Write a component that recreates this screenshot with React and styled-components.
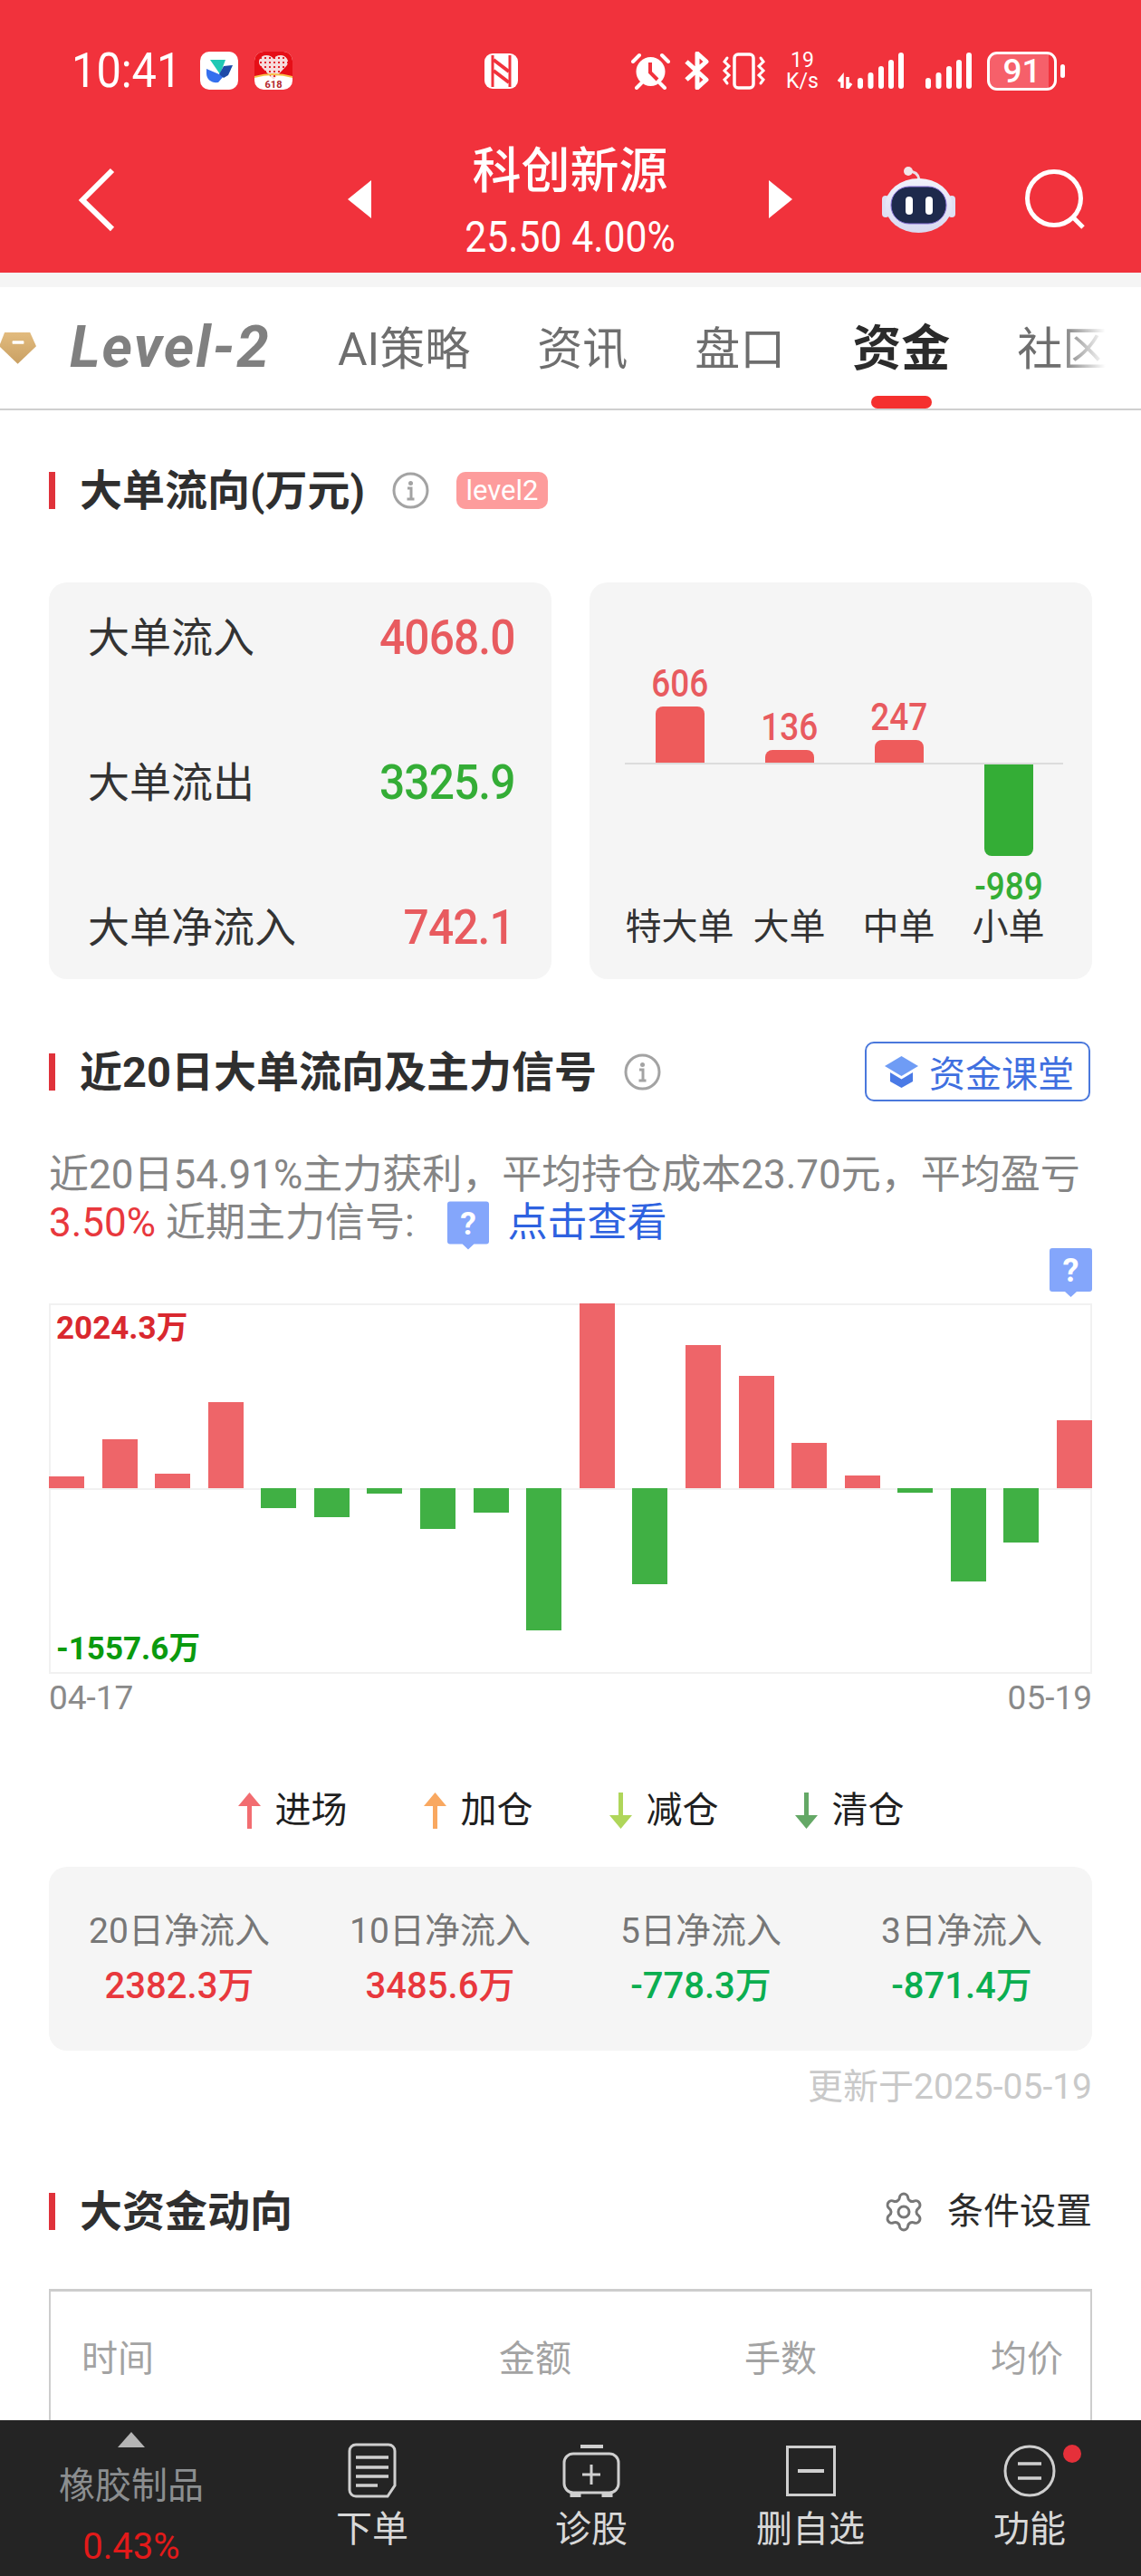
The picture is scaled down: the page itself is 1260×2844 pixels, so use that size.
import React from 'react'
import styled, { createGlobalStyle } from 'styled-components'
import { Settings } from 'lucide-react'

const GlobalStyle = createGlobalStyle`
  html, body {
    margin: 0;
    padding: 0;
    background: #fff;
  }
  body {
    font-family: Roboto, "Noto Sans CJK SC", sans-serif;
  }
  * {
    box-sizing: border-box;
  }
`

const Page = styled.div`
  width: 1260px;
  height: 2844px;
  display: flex;
  flex-direction: column;
  overflow: hidden;
  background: #fff;
  color: #2b2b2b;
`

const Header = styled.header`
  height: 301px;
  flex: none;
  background: #f1323c;
  color: #fff;
  padding-top: 48px;
`

const StatusBar = styled.div`
  height: 60px;
  display: flex;
  align-items: center;
  padding: 0 84px 0 79px;
`

// the clock and prices use a narrow DIN style face, so Roboto gets squeezed a little
const Time = styled.span`
  width: 142px;
  font-size: 53px;
  line-height: 60px;
  transform: scaleX(0.92);
  transform-origin: left center;
`

const AppIcon = styled.svg`
  width: 42px;
  height: 42px;
  margin-right: ${(p) => p.$mr || 0}px;
`

const StatusRight = styled.div`
  margin-left: auto;
  display: flex;
  align-items: center;
`

const StatusIcon = styled.svg`
  flex: none;
  margin-left: ${(p) => p.$ml || 0}px;
`

const NetSpeed = styled.div`
  width: 40px;
  margin-left: 20px;
  text-align: center;
  font-size: 23px;
  line-height: 23px;
`

const Battery = styled.div`
  width: 77px;
  height: 43px;
  margin-left: 17px;
  border: 3px solid #fff;
  border-radius: 11px;
  background: linear-gradient(90deg, #f6606a 92%, transparent 92%);
  text-align: center;
  font-size: 37px;
  line-height: 37px;
  font-weight: 500;
`

const BatteryCap = styled.div`
  width: 5px;
  height: 15px;
  margin-left: 4px;
  border-radius: 3px;
  background: #fff;
`

const Nav = styled.nav`
  height: 128px;
  margin-top: 48px;
  display: flex;
  align-items: center;
  padding-left: 86px;
`

const NavIcon = styled.svg`
  flex: none;
  margin-left: ${(p) => p.$ml || 0}px;
`

const Stock = styled.div`
  width: 439px;
  text-align: center;
`

const StockName = styled.div`
  font-size: 54px;
  line-height: 62px;
  font-weight: 500;
  padding-top: 3px;
  margin-bottom: -3px;
`

const StockPrice = styled.div`
  margin-top: 22px;
  font-size: 48px;
  line-height: 44px;
  transform: scaleX(0.89);
`

const GreyStrip = styled.div`
  height: 16px;
  flex: none;
  background: #f5f5f5;
`

const Tabs = styled.div`
  position: relative;
  height: 136px;
  flex: none;
  display: flex;
  align-items: center;
  gap: 74px;
  overflow: hidden;
  border-bottom: 2px solid #cfcfcf;

  &::after {
    content: '';
    position: absolute;
    top: 0;
    right: 30px;
    bottom: 2px;
    width: 62px;
    background: linear-gradient(90deg, rgba(255, 255, 255, 0), #fff 85%);
  }
`

const LogoTab = styled.div`
  width: 299px;
  flex: none;
  display: flex;
  align-items: center;
`

const LogoText = styled.span`
  margin-left: 37px;
  font-size: 64px;
  line-height: 70px;
  font-weight: 700;
  font-style: italic;
  letter-spacing: 2px;
  color: #808080;
`

const Tab = styled.div`
  position: relative;
  flex: none;
  height: 134px;
  padding-top: 2px;
  line-height: 134px;
  font-size: ${(p) => (p.$active ? 54 : 50)}px;
  font-weight: ${(p) => (p.$active ? 700 : 400)};
  color: ${(p) => (p.$active ? '#2b2b2b' : '#6e6e6e')};
`

const TabMark = styled.span`
  position: absolute;
  left: 21px;
  bottom: 0;
  width: 67px;
  height: 14px;
  border-radius: 7px;
  background: #f5302e;
`

const Content = styled.main`
  flex: 1;
  min-height: 0;
  overflow: hidden;
  padding: 68px 54px 0;
`

const TitleRow = styled.div`
  display: flex;
  align-items: center;
  justify-content: ${(p) => (p.$between ? 'space-between' : 'flex-start')};
  margin-top: ${(p) => p.$mt || 0}px;
  min-height: 41px;
`

const TitleLeft = styled.div`
  display: flex;
  align-items: center;
`

const Title = styled.h2`
  margin: 0;
  height: 41px;
  padding-left: 27px;
  border-left: 7px solid #e0323a;
  font-size: 47px;
  line-height: 41px;
  font-weight: 700;
  color: #2f2f2f;
`

const InfoIcon = styled.svg`
  width: 41px;
  height: 41px;
  margin-left: 30px;
  flex: none;
`

const LevelTag = styled.span`
  margin-left: 30px;
  width: 101px;
  height: 41px;
  border-radius: 10px;
  background: #fd9c9c;
  color: #fff;
  font-size: 31px;
  line-height: 41px;
  text-align: center;
`

const CardRow = styled.div`
  margin-top: 81px;
  display: grid;
  grid-template-columns: 555px 555px;
  justify-content: space-between;
`

const Card = styled.div`
  height: 438px;
  border-radius: 20px;
  background: #f5f5f5;
`

const FlowList = styled(Card)`
  display: flex;
  flex-direction: column;
  justify-content: space-between;
  padding: 30px 41px 28px 43px;
`

const FlowRow = styled.div`
  display: flex;
  justify-content: space-between;
  align-items: center;
  height: 60px;
  font-size: 46px;
  color: #333;
`

const FlowLabel = styled.span`
  margin-top: -6px;
`

const FlowValue = styled.span`
  font-size: 54px;
  font-weight: 500;
  letter-spacing: -1px;
  color: ${(p) => p.$color};
  transform: scaleX(0.92);
  transform-origin: right center;
`

const Bars = styled(Card)`
  padding: 57px 32px 0 39px;
`

const BarsGrid = styled.div`
  width: 484px;
  display: grid;
  grid-template-columns: repeat(4, 121px);
`

const BarCol = styled.div`
  display: flex;
  flex-direction: column;
  align-items: center;
`

const UpArea = styled(BarCol)`
  height: 142px;
  justify-content: flex-end;
`

const DownArea = styled(BarCol)`
  height: 155px;
`

const AxisLine = styled.div`
  grid-column: 1 / -1;
  height: 2px;
  background: #dcdcdc;
`

const Bar = styled.div`
  width: 54px;
  height: ${(p) => p.$h}px;
  background: ${(p) => p.$color};
  border-radius: ${(p) => (p.$down ? '0 0 8px 8px' : '8px 8px 0 0')};
`

const BarValue = styled.div`
  font-size: 42px;
  line-height: 34px;
  font-weight: 500;
  color: ${(p) => p.$color};
  margin-bottom: ${(p) => (p.$down ? 0 : 8)}px;
  margin-top: ${(p) => (p.$down ? 17 : 0)}px;
  transform: scaleX(0.88);
`

const BarLabel = styled.div`
  text-align: center;
  font-size: 40px;
  line-height: 50px;
  white-space: nowrap;
  color: #333;
`

const CourseButton = styled.div`
  width: 249px;
  height: 66px;
  margin-right: 2px;
  display: flex;
  align-items: center;
  padding-left: 20px;
  gap: 12px;
  border: 2px solid #4a78dc;
  border-radius: 10px;
  font-size: 40px;
  color: #3f6fe0;
`

const Summary = styled.p`
  margin: 55px 0 0;
  font-size: 44px;
  line-height: 53px;
  color: #858585;
`

const RedText = styled.span`
  color: #e8383d;
`

const BlueLink = styled.span`
  color: #2e62e0;
`

const HelpInline = styled.svg`
  width: 46px;
  height: 54px;
  margin: -10px 21px -10px 36px;
  vertical-align: middle;
`

const Chart = styled.div`
  position: relative;
  margin-top: 62px;
  height: 409px;
  box-shadow: inset 0 0 0 2px #f1f1f1;
`

const HelpPin = styled.svg`
  position: absolute;
  right: 0;
  top: -61px;
  width: 47px;
  height: 54px;
`

const ChartRow = styled.div`
  height: ${(p) => p.$h}px;
  display: flex;
  justify-content: space-between;
  align-items: ${(p) => (p.$up ? 'flex-end' : 'flex-start')};
  box-shadow: ${(p) => (p.$up ? '0 2px 0 #f1f1f1' : 'none')};
`

const ChartBar = styled.div`
  width: 39px;
  background: ${(p) => p.$color};
`

const ChartExtreme = styled.span`
  position: absolute;
  left: 8px;
  ${(p) => (p.$low ? 'bottom: 7px;' : 'top: 8px;')}
  font-size: 35px;
  line-height: 40px;
  font-weight: 700;
  color: ${(p) => p.$color};
`

const AxisDates = styled.div`
  margin-top: 7px;
  display: flex;
  justify-content: space-between;
  font-size: 37px;
  line-height: 40px;
  color: #8a8a8a;
`

const Legend = styled.div`
  margin-top: 84px;
  display: flex;
  justify-content: center;
  gap: 83px;
`

const LegendItem = styled.div`
  display: flex;
  align-items: center;
  gap: 15px;
  font-size: 40px;
  line-height: 40px;
  color: #1f1f1f;
`

const StatsCard = styled.div`
  margin-top: 42px;
  height: 203px;
  padding-top: 49px;
  display: grid;
  grid-template-columns: repeat(4, 1fr);
  grid-auto-rows: min-content;
  border-radius: 20px;
  background: #f5f5f5;
  text-align: center;
`

const StatLabel = styled.div`
  font-size: 39px;
  line-height: 44px;
  color: #777;
`

const StatValue = styled.div`
  margin-top: 17px;
  font-size: 40px;
  line-height: 44px;
  font-weight: 500;
  color: ${(p) => p.$color};
`

const Updated = styled.div`
  margin-top: 20px;
  text-align: right;
  font-size: 39px;
  line-height: 40px;
  color: #c9c9c9;
`

const ConditionLink = styled.div`
  display: flex;
  align-items: center;
  gap: 24px;
  height: 41px;
  font-size: 40px;
  line-height: 41px;
  color: #2b2b2b;

  svg {
    color: #777;
  }
`

const Table = styled.div`
  margin-top: 65px;
  height: 300px;
  padding: 55px 34px 0;
  border: solid #cdcdcd;
  border-width: 3px 2px 0;
`

const TableHead = styled.div`
  display: grid;
  grid-template-columns: 300px 241px 271px 272px;
  font-size: 40px;
  line-height: 40px;
  color: #a3a3a3;

  span + span {
    text-align: right;
  }
`

const BottomBar = styled.footer`
  height: 172px;
  flex: none;
  display: grid;
  grid-template-columns: 290px repeat(4, 242px);
  background: #242424;
  color: #d8d8d8;
`

const SectorCell = styled.div`
  display: flex;
  flex-direction: column;
  align-items: center;
  padding-top: 13px;
`

const UpTriangle = styled.div`
  width: 0;
  height: 0;
  border-left: 15px solid transparent;
  border-right: 15px solid transparent;
  border-bottom: 17px solid #b5b5b5;
`

const SectorName = styled.div`
  margin-top: 23px;
  font-size: 40px;
  line-height: 40px;
  color: #8b8e90;
`

const SectorChange = styled.div`
  margin-top: 27px;
  font-size: 40px;
  line-height: 40px;
  color: #e21a1a;
`

const ActionCell = styled.div`
  display: flex;
  flex-direction: column;
  align-items: center;
  padding-top: 25px;
`

const ActionIcon = styled.div`
  position: relative;
  height: 61px;
  display: flex;
  align-items: center;
  justify-content: center;
`

const RedDot = styled.span`
  position: absolute;
  left: 66px;
  top: 2px;
  width: 20px;
  height: 20px;
  border-radius: 50%;
  background: #e5303a;
`

const ActionLabel = styled.div`
  margin-top: 15px;
  font-size: 40px;
  line-height: 40px;
`

// status bar drawings
const WorkIcon = () => (
  <AppIcon viewBox="0 0 42 42" $mr={18}>
    <rect width="42" height="42" rx="10" fill="#fff" />
    <path d="M11 9h17l-6 16z" fill="#1fc8b4" />
    <path d="M7 19l14 6 5 2-6 7c-7 1-13-3-13-10z" fill="#3570ee" />
    <path d="M26 16l10-1-5 11-5 3-5-4z" fill="#1d4aa8" />
  </AppIcon>
)

const HeartIcon = () => (
  <AppIcon viewBox="0 0 42 42">
    <defs>
      <pattern id="heartDots" width="5" height="5" patternUnits="userSpaceOnUse">
        <rect width="5" height="5" fill="#f6dcdc" />
        <rect x="1" y="1" width="2" height="2" fill="#e4252c" />
      </pattern>
    </defs>
    <rect width="42" height="42" rx="10" fill="#fff" />
    <path d="M0 10a10 10 0 0 1 10-10h22a10 10 0 0 1 10 10v18q-21 -6 -42 0z" fill="#e60f17" />
    <path d="M21 31L6 15c-3-5 1-11 7-11 4 0 7 2 8 4 1-2 4-4 8-4 6 0 10 6 7 11z" fill="url(#heartDots)" />
    <path d="M0 27q21-6 42 0v2q-21-6-42 0z" fill="#f7c04a" />
    <text x="21" y="40" textAnchor="middle" fontSize="11" fontWeight="700" fill="#b3262c">618</text>
  </AppIcon>
)

const NfcIcon = () => (
  <StatusIcon width="37" height="39" viewBox="0 0 37 39" $ml={212}>
    <rect width="37" height="39" rx="9" fill="#fff" />
    <path d="M9 2v35M28 2v35" stroke="#f1323c" strokeWidth="3" />
    <path d="M10 7l17 13M10 19l17 13" stroke="#f1323c" strokeWidth="4" fill="none" />
  </StatusIcon>
)

const AlarmIcon = () => (
  <StatusIcon width="43" height="41" viewBox="0 0 43 41">
    <circle cx="21.5" cy="21" r="16" fill="#fff" />
    <path d="M21 11v11l8 8" stroke="#f1323c" strokeWidth="4" fill="none" />
    <path d="M2 10l7-7M41 10l-7-7M6 39l5-5M37 39l-5-5" stroke="#fff" strokeWidth="4" strokeLinecap="round" />
  </StatusIcon>
)

const BluetoothIcon = () => (
  <StatusIcon width="29" height="42" viewBox="0 0 29 42" $ml={15}>
    <path d="M3 11l22 20-10 9V2l10 9L3 31" stroke="#fff" strokeWidth="5" fill="none" strokeLinejoin="round" />
  </StatusIcon>
)

const VibrateIcon = () => (
  <StatusIcon width="49" height="41" viewBox="0 0 49 41" $ml={13}>
    <rect x="14" y="2" width="21" height="37" rx="4" fill="none" stroke="#fff" strokeWidth="3.5" />
    <path
      d="M6 6l-3 4 5 5-5 5 5 5-5 5 3 4M43 6l3 4-5 5 5 5-5 5 5 5-3 4"
      stroke="#fff"
      strokeWidth="3"
      fill="none"
      strokeLinecap="round"
    />
  </StatusIcon>
)

const SIGNAL_BARS = [
  { x: 0, h: 12 },
  { x: 11.5, h: 18 },
  { x: 23, h: 25 },
  { x: 34, h: 32 },
  { x: 45, h: 40 },
]

const SignalIcon = ({ ml, width, offset, arrows }) => (
  <StatusIcon width={width} height="40" viewBox={`0 0 ${width} 40`} $ml={ml}>
    {arrows && (
      <path d="M5 39V27l-4 5M11 27v12l4-5" stroke="#fff" strokeWidth="3.5" fill="none" />
    )}
    {SIGNAL_BARS.map((b) => (
      <rect key={b.x} x={b.x + offset} y={40 - b.h} width="6" height={b.h} rx="3" fill="#fff" />
    ))}
  </StatusIcon>
)

const RobotIcon = () => (
  <NavIcon width="81" height="73" viewBox="0 0 81 73" $ml={99}>
    <defs>
      <linearGradient id="robotShell" x1="0" y1="0" x2="0" y2="1">
        <stop offset="0" stopColor="#f1f2fb" />
        <stop offset="1" stopColor="#d8d9f0" />
      </linearGradient>
    </defs>
    <path d="M29 5c7 0 11 3 12 9" stroke="#eadfe6" strokeWidth="3" fill="none" />
    <circle cx="29" cy="5" r="5" fill="#f1e6ea" />
    <rect x="0" y="32" width="8" height="24" rx="4" fill="#dfe0f3" />
    <rect x="73" y="32" width="8" height="24" rx="4" fill="#dfe0f3" />
    <ellipse cx="40.5" cy="43" rx="37" ry="30" fill="url(#robotShell)" />
    <rect x="10" y="22" width="61" height="41" rx="20" fill="#1e2a4c" stroke="#8a73d8" strokeWidth="1" />
    <rect x="26" y="33" width="8" height="20" rx="4" fill="#fff" />
    <rect x="48" y="33" width="8" height="20" rx="4" fill="#fff" />
  </NavIcon>
)

const HelpMark = () => (
  <>
    <path d="M3 0h41a3 3 0 0 1 3 3v42a3 3 0 0 1-3 3H30l-6.500 6-6.500-6H3a3 3 0 0 1-3-3V3a3 3 0 0 1 3-3z" fill="#84a6fb" />
    <text x="23.500" y="37" textAnchor="middle" fontSize="36" fontWeight="700" fill="#fff">?</text>
  </>
)

const Info = () => (
  <InfoIcon viewBox="0 0 41 41">
    <circle cx="20.500" cy="20.500" r="18.500" fill="none" stroke="#a3a3a3" strokeWidth="3" />
    <circle cx="20.500" cy="12.500" r="2.500" fill="#a3a3a3" />
    <path d="M17 18h4v11M16.500 30h8" stroke="#a3a3a3" strokeWidth="3" fill="none" />
  </InfoIcon>
)

const CapIcon = () => (
  <svg width="37" height="35" viewBox="0 0 37 35">
    <path d="M18.500 0L37 11 18.500 22 0 11z" fill="#6f9cf5" />
    <path d="M6 18l12.500 7.500L31 18v10l-12.500 7L6 28z" fill="#4a7ae6" />
  </svg>
)

const Arrow = ({ up, color }) => (
  <svg width="27" height="40" viewBox="0 0 27 40">
    {up ? (
      <path d="M13.500 0L26 15H16v25h-5V15H1z" fill={color} />
    ) : (
      <path d="M11 0h5v25h10L13.500 40 1 25h10z" fill={color} />
    )}
  </svg>
)

const DocIcon = () => (
  <svg width="54" height="61" viewBox="0 0 54 61" fill="none" stroke="#cfcfcf" strokeWidth="3">
    <path d="M9 2h36a7 7 0 0 1 7 7v38l-8 12H9a7 7 0 0 1-7-7V9a7 7 0 0 1 7-7z" />
    <path d="M9 16h36M9 27h36M9 37h36M9 47h24" strokeWidth="3.500" />
  </svg>
)

const DiagnoseIcon = () => (
  <svg width="64" height="58" viewBox="0 0 64 58" fill="none" stroke="#cfcfcf" strokeWidth="3">
    <path d="M20 2h25" strokeWidth="4" />
    <rect x="2" y="10" width="60" height="43" rx="10" />
    <path d="M32 22v22M22 33h20" />
    <path d="M10 54h9v4h-9zM45 54h9v4h-9z" fill="#cfcfcf" />
  </svg>
)

const RemoveIcon = () => (
  <svg width="55" height="56" viewBox="0 0 55 56" fill="none" stroke="#cfcfcf" strokeWidth="3">
    <rect x="1.500" y="1.500" width="52" height="53" />
    <path d="M13 28h29" strokeWidth="4" />
  </svg>
)

const MoreIcon = () => (
  <svg width="58" height="58" viewBox="0 0 58 58" fill="none" stroke="#cfcfcf" strokeWidth="3">
    <circle cx="29" cy="29" r="27" />
    <path d="M16 21h26M16 37h26" strokeWidth="3.500" />
  </svg>
)

const RED = '#ee5b5b'
const GREEN = '#34ad36'

const FLOW_ROWS = [
  { label: '大单流入', value: '4068.0', color: '#e85b5f' },
  { label: '大单流出', value: '3325.9', color: GREEN },
  { label: '大单净流入', value: '742.1', color: '#e85b5f' },
]

const ORDER_BARS = [
  { label: '特大单', value: '606', h: 62 },
  { label: '大单', value: '136', h: 14 },
  { label: '中单', value: '247', h: 25 },
  { label: '小单', value: '-989', h: -101 },
]

// daily net flow, in px from the zero line
const DAILY_FLOW = [13, 54, 16, 95, -22, -32, -6, -45, -27, -157, 204, -106, 158, 124, 50, 14, -5, -103, -60, 75]

const SIGNALS = [
  { label: '进场', up: true, color: '#f26d71' },
  { label: '加仓', up: true, color: '#f9a860' },
  { label: '减仓', up: false, color: '#afd65a' },
  { label: '清仓', up: false, color: '#64a866' },
]

const NET_STATS = [
  { label: '20日净流入', value: '2382.3万', color: '#e8383d' },
  { label: '10日净流入', value: '3485.6万', color: '#e8383d' },
  { label: '5日净流入', value: '-778.3万', color: '#0bae50' },
  { label: '3日净流入', value: '-871.4万', color: '#0bae50' },
]

const App = () => {
  return (
    <Page>
      <GlobalStyle />
      <Header>
        <StatusBar>
          <Time>10:41</Time>
          <WorkIcon />
          <HeartIcon />
          <NfcIcon />
          <StatusRight>
            <AlarmIcon />
            <BluetoothIcon />
            <VibrateIcon />
            <NetSpeed>
              19
              <br />
              K/s
            </NetSpeed>
            <SignalIcon ml={19} width={73} offset={22} arrows />
            <SignalIcon ml={24} width={51} offset={0} />
            <Battery>91</Battery>
            <BatteryCap />
          </StatusRight>
        </StatusBar>
        <Nav>
          <NavIcon width="41" height="71" viewBox="0 0 41 71">
            <path d="M38 3L5 36l33 32" stroke="#fff" strokeWidth="6" fill="none" />
          </NavIcon>
          <NavIcon width="26" height="42" viewBox="0 0 26 42" $ml={257}>
            <path d="M26 0v42L0 21z" fill="#fff" />
          </NavIcon>
          <Stock>
            <StockName>科创新源</StockName>
            <StockPrice>25.50 4.00%</StockPrice>
          </Stock>
          <NavIcon width="26" height="42" viewBox="0 0 26 42">
            <path d="M0 0v42l26-21z" fill="#fff" />
          </NavIcon>
          <RobotIcon />
          <NavIcon width="66" height="66" viewBox="0 0 66 66" $ml={77}>
            <circle cx="32" cy="32" r="29.500" fill="none" stroke="#fff" strokeWidth="5" />
            <path d="M53 53l11 11" stroke="#fff" strokeWidth="5" />
          </NavIcon>
        </Nav>
      </Header>
      <GreyStrip />
      <Tabs>
        <LogoTab>
          <svg width="40" height="42" viewBox="-7 0 47 42">
            <defs>
              <linearGradient id="gem" x1="0" y1="0" x2="0" y2="1">
                <stop offset="0" stopColor="#e2bb7e" />
                <stop offset="1" stopColor="#c9a063" />
              </linearGradient>
            </defs>
            <path d="M-1 1h33l8 18-24 23L-8 19z" fill="url(#gem)" />
            <rect x="9" y="12" width="15" height="4" rx="1" fill="#fff" />
          </svg>
          <LogoText>Level-2</LogoText>
        </LogoTab>
        <Tab>AI策略</Tab>
        <Tab>资讯</Tab>
        <Tab>盘口</Tab>
        <Tab $active>
          资金
          <TabMark />
        </Tab>
        <Tab>社区</Tab>
      </Tabs>

      <Content>
        <TitleRow>
          <Title>大单流向(万元)</Title>
          <Info />
          <LevelTag>level2</LevelTag>
        </TitleRow>

        <CardRow>
          <FlowList>
            {FLOW_ROWS.map((row) => (
              <FlowRow key={row.label}>
                <FlowLabel>{row.label}</FlowLabel>
                <FlowValue $color={row.color}>{row.value}</FlowValue>
              </FlowRow>
            ))}
          </FlowList>
          <Bars>
            <BarsGrid>
              {ORDER_BARS.map((bar) => (
                <UpArea key={bar.label}>
                  {bar.h > 0 && (
                    <>
                      <BarValue $color="#e85b5f">{bar.value}</BarValue>
                      <Bar $h={bar.h} $color={RED} />
                    </>
                  )}
                </UpArea>
              ))}
              <AxisLine />
              {ORDER_BARS.map((bar) => (
                <DownArea key={bar.label}>
                  {bar.h < 0 && (
                    <>
                      <Bar $h={-bar.h} $color={GREEN} $down />
                      <BarValue $color={GREEN} $down>
                        {bar.value}
                      </BarValue>
                    </>
                  )}
                </DownArea>
              ))}
              {ORDER_BARS.map((bar) => (
                <BarLabel key={bar.label}>{bar.label}</BarLabel>
              ))}
            </BarsGrid>
          </Bars>
        </CardRow>

        <TitleRow $between $mt={69}>
          <TitleLeft>
            <Title>近20日大单流向及主力信号</Title>
            <Info />
          </TitleLeft>
          <CourseButton>
            <CapIcon />
            资金课堂
          </CourseButton>
        </TitleRow>

        <Summary>
          近20日54.91%主力获利，平均持仓成本23.70元，平均盈亏
          <br />
          <RedText>3.50%</RedText> 近期主力信号:
          <HelpInline viewBox="0 0 47 54">
            <HelpMark />
          </HelpInline>
          <BlueLink>点击查看</BlueLink>
        </Summary>

        <Chart>
          <HelpPin viewBox="0 0 47 54">
            <HelpMark />
          </HelpPin>
          <ChartRow $up $h={204}>
            {DAILY_FLOW.map((v, i) => (
              <ChartBar key={i} $color="#ee6569" style={{ height: Math.max(v, 0) }} />
            ))}
          </ChartRow>
          <ChartRow $h={205}>
            {DAILY_FLOW.map((v, i) => (
              <ChartBar key={i} $color="#40b044" style={{ height: Math.max(-v, 0) }} />
            ))}
          </ChartRow>
          <ChartExtreme $color="#d9282f">2024.3万</ChartExtreme>
          <ChartExtreme $low $color="#0a9a0e">
            -1557.6万
          </ChartExtreme>
        </Chart>
        <AxisDates>
          <span>04-17</span>
          <span>05-19</span>
        </AxisDates>

        <Legend>
          {SIGNALS.map((s) => (
            <LegendItem key={s.label}>
              <Arrow up={s.up} color={s.color} />
              {s.label}
            </LegendItem>
          ))}
        </Legend>

        <StatsCard>
          {NET_STATS.map((s) => (
            <div key={s.label}>
              <StatLabel>{s.label}</StatLabel>
              <StatValue $color={s.color}>{s.value}</StatValue>
            </div>
          ))}
        </StatsCard>
        <Updated>更新于2025-05-19</Updated>

        <TitleRow $between $mt={97}>
          <Title>大资金动向</Title>
          <ConditionLink>
            <Settings size={48} strokeWidth={1.5} />
            条件设置
          </ConditionLink>
        </TitleRow>

        <Table>
          <TableHead>
            <span>时间</span>
            <span>金额</span>
            <span>手数</span>
            <span>均价</span>
          </TableHead>
        </Table>
      </Content>

      <BottomBar>
        <SectorCell>
          <UpTriangle />
          <SectorName>橡胶制品</SectorName>
          <SectorChange>0.43%</SectorChange>
        </SectorCell>
        <ActionCell>
          <ActionIcon>
            <DocIcon />
          </ActionIcon>
          <ActionLabel>下单</ActionLabel>
        </ActionCell>
        <ActionCell>
          <ActionIcon>
            <DiagnoseIcon />
          </ActionIcon>
          <ActionLabel>诊股</ActionLabel>
        </ActionCell>
        <ActionCell>
          <ActionIcon>
            <RemoveIcon />
          </ActionIcon>
          <ActionLabel>删自选</ActionLabel>
        </ActionCell>
        <ActionCell>
          <ActionIcon>
            <MoreIcon />
            <RedDot />
          </ActionIcon>
          <ActionLabel>功能</ActionLabel>
        </ActionCell>
      </BottomBar>
    </Page>
  )
}

export default App
